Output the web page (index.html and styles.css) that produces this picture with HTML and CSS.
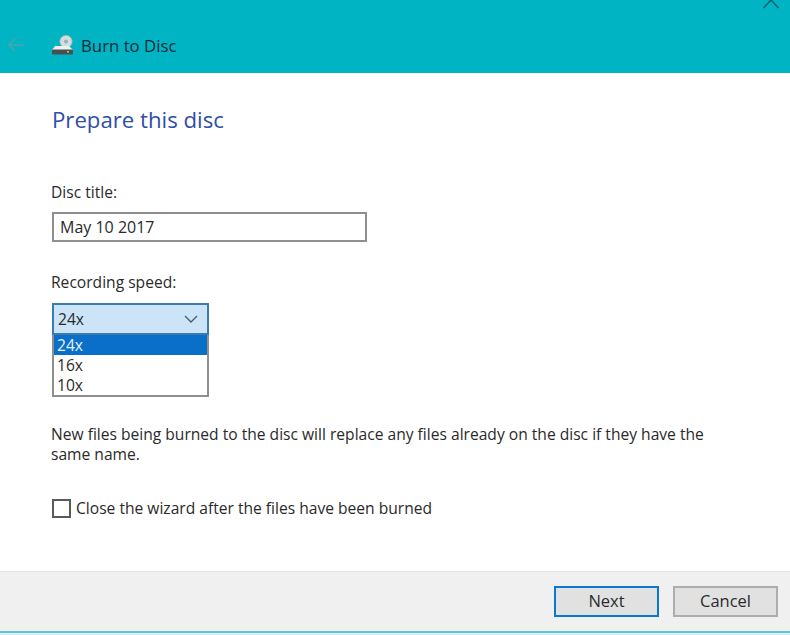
FILE: index.html
```html
<!DOCTYPE html>
<html lang="en">
  <head>
    <meta charset="UTF-8" />
    <title>Burn to Disc</title>
    <link rel="stylesheet" href="styles.css">
  </head>
  <body>
    <div class="wizard">
      <div class="header">
        <svg class="close-icon" width="18" height="10" viewBox="0 0 18 10">
          <path d="M1.5 9 L9 1 L16.5 9" fill="none" stroke="#0b5f70" stroke-width="1.6" />
        </svg>
        <svg class="back-icon" width="18" height="14" viewBox="0 0 18 14">
          <path d="M17 7 H2 M8 1 L2 7 L8 13" fill="none" stroke="#4fa3ae" stroke-width="1.4" />
        </svg>
        <svg class="disc-icon" width="23" height="20" viewBox="0 0 23 20">
          <circle cx="15" cy="6.5" r="6.2" fill="#d3dde0" stroke="#9aa9ae" stroke-width="0.8" />
          <circle cx="15" cy="6.5" r="2" fill="#8fb4bf" />
          <path d="M4 11 L18 11 L22 15 L1 15 Z" fill="#eef1f2" />
          <rect x="1" y="14.5" width="21" height="5" rx="1" fill="#4b4f52" />
          <rect x="16" y="16" width="2" height="1.6" fill="#7ed957" />
        </svg>
        <span class="header-title">Burn to Disc</span>
      </div>

      <div class="content">
        <h2>Prepare this disc</h2>

        <label class="field-label" for="title">Disc title:</label>
        <input class="text-input" type="text" id="title" value="May 10 2017" />

        <div class="field-label speed-label">Recording speed:</div>
        <div class="combo">
          <span>24x</span>
          <svg width="14" height="8" viewBox="0 0 14 8">
            <path d="M1 1 L7 7 L13 1" fill="none" stroke="#4a5a66" stroke-width="1.3" />
          </svg>
        </div>
        <ul class="combo-list">
          <li class="selected">24x</li>
          <li>16x</li>
          <li>10x</li>
        </ul>

        <p class="note">New files being burned to the disc will replace any files already on the disc if they have the same name.</p>

        <label class="check-row">
          <span class="check-box"></span>
          Close the wizard after the files have been burned
        </label>
      </div>

      <div class="footer">
        <button class="btn btn-default">Next</button>
        <button class="btn">Cancel</button>
      </div>
      <div class="bottom-line"></div>
    </div>
  </body>
</html>
```

FILE: styles.css
```css
* {
  box-sizing: border-box;
}
body {
  margin: 0;
  font-family: "Open Sans", "Noto Sans", sans-serif;
  font-size: 15.6px;
  color: #2a2a2a;
  background: #fff;
}
.wizard {
  width: 790px;
  height: 635px;
  display: flex;
  flex-direction: column;
  overflow: hidden;
}
.header {
  position: relative;
  height: 73px;
  flex: none;
  background: #00b4c4;
  display: flex;
  align-items: center;
  padding: 17px 0 0 7px;
}
.close-icon {
  position: absolute;
  top: -1px;
  right: 10px;
}
.back-icon {
  margin-right: 26px;
}
.disc-icon {
  margin-right: 7px;
}
.header-title {
  color: #0d2b36;
  font-size: 16.8px;
}
.content {
  flex: 1;
  padding: 30px 0 0 51px;
}
h2 {
  margin: 0 0 0 1px;
  font-size: 22.2px;
  font-weight: 400;
  line-height: 34px;
  color: #2f4fa8;
}
.field-label {
  display: block;
  line-height: 20px;
}
label.field-label {
  margin-top: 45px;
}
.text-input {
  display: block;
  width: 315px;
  height: 30px;
  margin: 10px 0 0 1px;
  padding: 0 6px;
  border: 2px solid #8f8f8f;
  font: inherit;
  font-size: 16px;
  color: #2a2a2a;
  background: #fff;
}
.speed-label {
  margin-top: 30px;
}
.combo {
  width: 157px;
  height: 32px;
  margin: 11px 0 0 1px;
  padding: 0 9px 0 4px;
  display: flex;
  align-items: center;
  justify-content: space-between;
  background: #cce4f7;
  border: 2px solid #3a7cb0;
}
.combo-list {
  width: 157px;
  margin: 0 0 0 1px;
  padding: 0;
  list-style: none;
  background: #fff;
  border: 2px solid #8f8f8f;
  border-top: 0;
  height: 62px;
}
.combo-list li {
  height: 20px;
  line-height: 21px;
  padding-left: 3px;
}
.combo-list .selected {
  background: #0a6fc9;
  color: #e8f3fc;
}
.note {
  width: 680px;
  margin: 27px 0 0;
  line-height: 20px;
}
.check-row {
  display: flex;
  align-items: center;
  gap: 5px;
  margin: 34px 0 0 1px;
  line-height: 20px;
}
.check-box {
  width: 19px;
  height: 19px;
  border: 2px solid #5a5a5a;
  background: #fff;
}
.footer {
  height: 60px;
  flex: none;
  background: #f0f0f0;
  border-top: 1px solid #e4e4e4;
  display: flex;
  justify-content: flex-end;
  align-items: center;
  gap: 14px;
  padding: 0 12px 1px 0;
}
.btn {
  width: 105px;
  height: 31px;
  border: 2px solid #adadad;
  background: #e1e1e1;
  font: inherit;
  font-size: 16.5px;
  color: #2a2a2a;
  padding: 0 0 2px;
}
.btn-default {
  border-color: #0a78d0;
}
.bottom-line {
  height: 4px;
  flex: none;
  background: #5cc8d4;
  border-bottom: 2px solid #d8f0f3;
}
```
